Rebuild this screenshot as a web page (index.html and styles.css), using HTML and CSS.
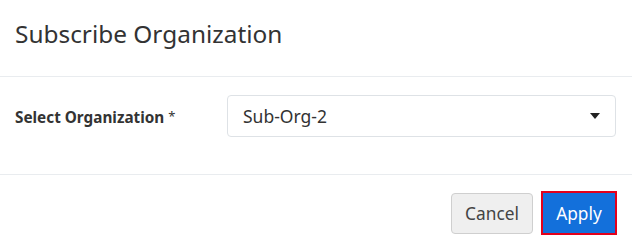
FILE: index.html
```html
<!DOCTYPE html>
<html>
<head>
<meta charset="utf-8">
<link rel="stylesheet" href="styles.css">
</head>
<body>
<div class="modal">
  <div class="modal-header">
    <h4 class="modal-title">Subscribe Organization</h4>
  </div>
  <div class="modal-body">
    <label class="field-label">Select Organization <span class="req">*</span></label>
    <div class="select">
      <span class="select-value">Sub-Org-2</span>
      <svg class="caret" width="10" height="6" viewBox="0 0 10 6"><path d="M0 0H10L5 6Z" fill="#222"/></svg>
    </div>
  </div>
  <div class="modal-footer">
    <button class="btn btn-default">Cancel</button>
    <button class="btn btn-primary">Apply</button>
  </div>
</div>
</body>
</html>
```
FILE: styles.css
```css
html, body {
  margin: 0;
  padding: 0;
  background: #fff;
}
body {
  font-family: "Noto Sans", "Open Sans", sans-serif;
  color: #333;
}
.modal {
  width: 632px;
  height: 247px;
  background: #fff;
}
.modal-header {
  height: 77px;
  box-sizing: border-box;
  border-bottom: 1px solid #e9ecef;
  padding: 0 15px;
  display: flex;
  align-items: center;
}
.modal-title {
  margin: 0;
  font-size: 24.4px;
  font-weight: 400;
  color: #333;
  line-height: 1;
  padding-bottom: 8px;
}
.modal-body {
  height: 98px;
  box-sizing: border-box;
  border-bottom: 1px solid #e9ecef;
  padding: 18px 16px 0 15px;
  display: flex;
  align-items: flex-start;
}
.field-label {
  width: 212px;
  font-size: 15.3px;
  font-weight: 700;
  color: #333;
  line-height: 42px;
}
.req {
  font-weight: 400;
  font-size: 13px;
  vertical-align: 2px;
}
.select {
  flex: 1;
  height: 42px;
  box-sizing: border-box;
  border: 1px solid #dee2e6;
  border-radius: 4px;
  display: flex;
  align-items: center;
  justify-content: space-between;
  padding: 0 15px 0 15px;
}
.select-value {
  font-size: 17.5px;
  color: #333;
}
.modal-footer {
  display: flex;
  justify-content: flex-end;
  align-items: center;
  gap: 8px;
  padding: 16px 15px 0 15px;
}
.btn {
  font-family: "Noto Sans", "Open Sans", sans-serif;
  font-size: 17.3px;
  border-radius: 4px;
  cursor: pointer;
  box-sizing: border-box;
  padding: 0;
}
.btn-default {
  width: 82px;
  height: 41px;
  background: #efefef;
  border: 1px solid #cfcfcf;
  color: #444;
}
.btn-primary {
  width: 76px;
  height: 44px;
  background: #1370db;
  border: 2px solid #e3001b;
  border-radius: 0;
  color: #fff;
}
```
